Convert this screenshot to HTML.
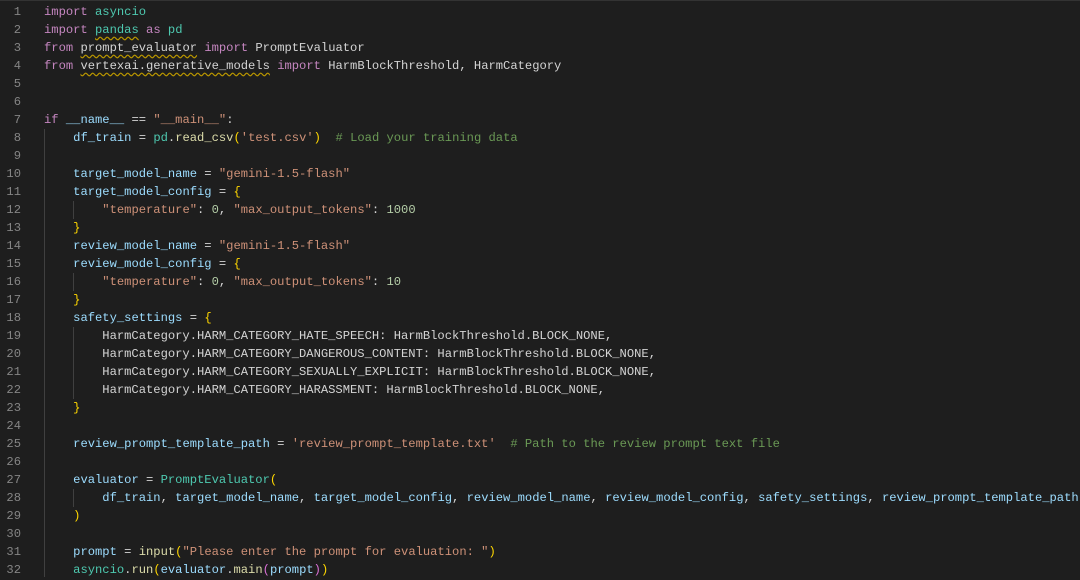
<!DOCTYPE html>
<html><head><meta charset="utf-8"><style>
html,body{margin:0;padding:0;background:#1e1e1e;width:1080px;height:580px;overflow:hidden}
.ed{position:absolute;top:3px;left:0;font-family:"Liberation Mono",monospace;font-size:12.15px;line-height:18px;color:#d4d4d4}
.ln{position:absolute;left:0;width:21px;text-align:right;color:#858585}
.ln div{height:18px}
.c{position:absolute;left:44px;width:1100px}
.l{height:18px;position:relative;white-space:pre}
.k{color:#c586c0}.m{color:#4ec9b0}.v{color:#9cdcfe}.s{color:#ce9178}.cm{color:#6a9955}.f{color:#dcdcaa}.n{color:#b5cea8}.b{color:#ffd700}.p{color:#da70d6}
.w{text-decoration:underline wavy #b89500;text-underline-offset:3px}
.g{position:absolute;width:1px;background:#404040}
.top{position:absolute;top:0;left:0;width:1080px;height:1px;background:#333}
</style></head><body>
<div class="top"></div>
<div class="g" style="left:44px;top:129px;height:448px"></div>
<div class="g" style="left:73px;top:201px;height:18px"></div>
<div class="g" style="left:73px;top:273px;height:18px"></div>
<div class="g" style="left:73px;top:327px;height:72px"></div>
<div class="g" style="left:73px;top:489px;height:18px"></div>
<div class="ed">
<div class="ln"><div>1</div><div>2</div><div>3</div><div>4</div><div>5</div><div>6</div><div>7</div><div>8</div><div>9</div><div>10</div><div>11</div><div>12</div><div>13</div><div>14</div><div>15</div><div>16</div><div>17</div><div>18</div><div>19</div><div>20</div><div>21</div><div>22</div><div>23</div><div>24</div><div>25</div><div>26</div><div>27</div><div>28</div><div>29</div><div>30</div><div>31</div><div>32</div></div>
<div class="c">
<div class="l"><span class="k">import</span> <span class="m">asyncio</span></div>
<div class="l"><span class="k">import</span> <span class="m w">pandas</span> <span class="k">as</span> <span class="m">pd</span></div>
<div class="l"><span class="k">from</span> <span class="w">prompt_evaluator</span> <span class="k">import</span> PromptEvaluator</div>
<div class="l"><span class="k">from</span> <span class="w">vertexai.generative_models</span> <span class="k">import</span> HarmBlockThreshold, HarmCategory</div>
<div class="l"></div>
<div class="l"></div>
<div class="l"><span class="k">if</span> <span class="v">__name__</span> == <span class="s">"__main__"</span>:</div>
<div class="l">    <span class="v">df_train</span> = <span class="m">pd</span>.<span class="f">read_csv</span><span class="b">(</span><span class="s">'test.csv'</span><span class="b">)</span>  <span class="cm"># Load your training data</span></div>
<div class="l"></div>
<div class="l">    <span class="v">target_model_name</span> = <span class="s">"gemini-1.5-flash"</span></div>
<div class="l">    <span class="v">target_model_config</span> = <span class="b">{</span></div>
<div class="l">        <span class="s">"temperature"</span>: <span class="n">0</span>, <span class="s">"max_output_tokens"</span>: <span class="n">1000</span></div>
<div class="l">    <span class="b">}</span></div>
<div class="l">    <span class="v">review_model_name</span> = <span class="s">"gemini-1.5-flash"</span></div>
<div class="l">    <span class="v">review_model_config</span> = <span class="b">{</span></div>
<div class="l">        <span class="s">"temperature"</span>: <span class="n">0</span>, <span class="s">"max_output_tokens"</span>: <span class="n">10</span></div>
<div class="l">    <span class="b">}</span></div>
<div class="l">    <span class="v">safety_settings</span> = <span class="b">{</span></div>
<div class="l">        HarmCategory.HARM_CATEGORY_HATE_SPEECH: HarmBlockThreshold.BLOCK_NONE,</div>
<div class="l">        HarmCategory.HARM_CATEGORY_DANGEROUS_CONTENT: HarmBlockThreshold.BLOCK_NONE,</div>
<div class="l">        HarmCategory.HARM_CATEGORY_SEXUALLY_EXPLICIT: HarmBlockThreshold.BLOCK_NONE,</div>
<div class="l">        HarmCategory.HARM_CATEGORY_HARASSMENT: HarmBlockThreshold.BLOCK_NONE,</div>
<div class="l">    <span class="b">}</span></div>
<div class="l"></div>
<div class="l">    <span class="v">review_prompt_template_path</span> = <span class="s">'review_prompt_template.txt'</span>  <span class="cm"># Path to the review prompt text file</span></div>
<div class="l"></div>
<div class="l">    <span class="v">evaluator</span> = <span class="m">PromptEvaluator</span><span class="b">(</span></div>
<div class="l">        <span class="v">df_train</span>, <span class="v">target_model_name</span>, <span class="v">target_model_config</span>, <span class="v">review_model_name</span>, <span class="v">review_model_config</span>, <span class="v">safety_settings</span>, <span class="v">review_prompt_template_path</span></div>
<div class="l">    <span class="b">)</span></div>
<div class="l"></div>
<div class="l">    <span class="v">prompt</span> = <span class="f">input</span><span class="b">(</span><span class="s">"Please enter the prompt for evaluation: "</span><span class="b">)</span></div>
<div class="l">    <span class="m">asyncio</span>.<span class="f">run</span><span class="b">(</span><span class="v">evaluator</span>.<span class="f">main</span><span class="p">(</span><span class="v">prompt</span><span class="p">)</span><span class="b">)</span></div>
</div></div>
</body></html>
